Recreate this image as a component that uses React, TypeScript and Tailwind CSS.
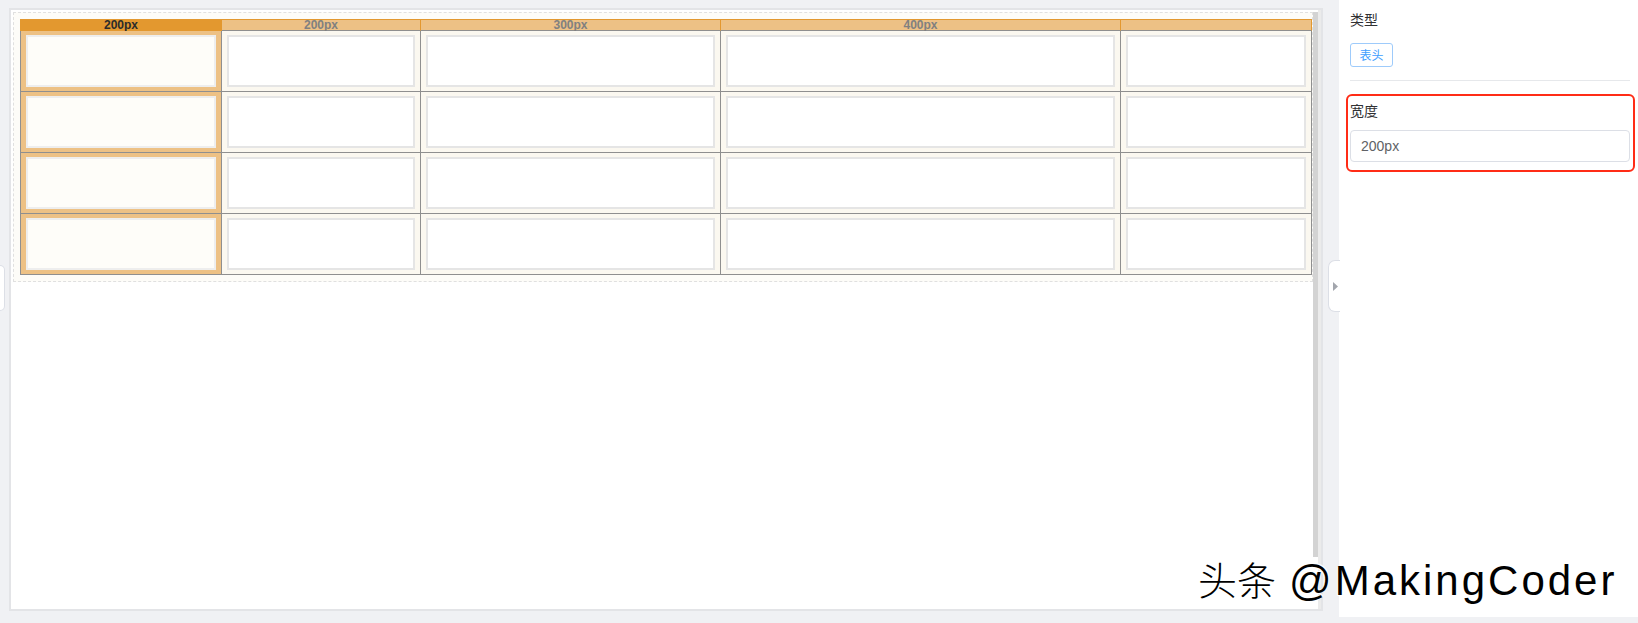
import React from "react";

const cols = [
  { w: "w-[201px]", label: "200px" },
  { w: "w-[199px]", label: "200px" },
  { w: "w-[300px]", label: "300px" },
  { w: "w-[400px]", label: "400px" },
  { w: "w-[191px]", label: "" },
];

const rows = [0, 1, 2, 3];

const HeaderRow: React.FC = () => (
  <div className="flex border-t border-l border-[#e3982f]">
    {cols.map((c, i) => (
      <div
        key={i}
        className={`${c.w} h-[11px] shrink-0 border-r text-center text-[12px] font-bold leading-[11px] ${
          i === 0
            ? "border-[#e3982f] bg-[#e3982f] text-[#2b2b2b]"
            : "border-r-[#e3982f] border-b border-b-[#8f8f8f] bg-[#edc185] text-[#808080]"
        }`}
      >
        {c.label}
      </div>
    ))}
  </div>
);

const BodyRow: React.FC = () => (
  <div className="flex border-l border-[#8f8f8f]">
    {cols.map((c, i) => (
      <div
        key={i}
        className={`${c.w} h-[61px] shrink-0 border-r border-b border-[#8f8f8f] pt-[4px] pb-[4px] pl-[5px] pr-[5px] ${
          i === 0 ? "bg-[#edc185]" : "bg-[#fbf8f0]"
        }`}
      >
        <div
          className={`h-full border-2 ${
            i === 0 ? "border-[#eeeeee] bg-[#fefdf9]" : "border-[#e5e5e5] bg-white"
          }`}
        />
      </div>
    ))}
  </div>
);

export default function App() {
  return (
    <div className="relative flex h-[623px] w-[1638px] overflow-hidden bg-[#f0f1f4] font-['Liberation_Sans',sans-serif]">
      {/* canvas area */}
      <div className="flex-1 pt-[8px] pb-[12px] pl-[9px] pr-[16px]">
        <div className="flex h-full border-2 border-[#e3e4e7] bg-white">
          <div className="flex-1 pt-[2px] pl-[2px]">
            <div className="border border-dashed border-[#e0e0e0] bg-[#fdfcf8] pt-[6px] pb-[6px] pl-[6px]">
              <HeaderRow />
              {rows.map((r) => (
                <BodyRow key={r} />
              ))}
            </div>
          </div>
          <div className="flex w-[8px]">
            <div className="mt-[2px] mb-[52px] w-[5px] bg-[#d3d3d3]" />
            <div className="w-[3px] bg-[#ebebeb]" />
          </div>
        </div>
      </div>

      {/* properties panel */}
      <div className="h-[617px] w-[299px] bg-white pl-[11px] pr-[8px] pt-[9px] font-['Noto_Sans_CJK_SC',sans-serif]">
        <div className="text-[14px] leading-[20px] text-[#303133]">类型</div>
        <div className="mt-[14px] flex h-[24px] w-[43px] items-center justify-center rounded-[3px] border border-[#9ecbfb] text-[12px] text-[#409eff]">
          表头
        </div>
        <div className="mt-[13px] h-px bg-[#e6e8eb]" />
        <div className="mt-[13px] -ml-[4px] -mr-[5px] rounded-[6px] border-2 border-[#ff2c16] pt-[4px] pb-[8px] pl-[2px] pr-[3px]">
          <div className="text-[14px] leading-[20px] text-[#303133]">宽度</div>
          <div className="mt-[10px] flex h-[32px] items-center rounded-[4px] border border-[#dcdfe6] px-[10px] font-['Liberation_Sans',sans-serif] text-[14px] text-[#606266]">
            200px
          </div>
        </div>
      </div>

      {/* collapse handles */}
      <div className="absolute left-0 top-[265px] h-[46px] w-[5px] rounded-r-[5px] border border-l-0 border-[#dcdfe6] bg-white" />
      <div className="absolute left-[1328px] top-[260px] flex h-[52px] w-[12px] items-center justify-center rounded-l-[7px] border border-r-0 border-[#dcdfe6] bg-white">
        <svg width="5" height="9" viewBox="0 0 5 9" className="ml-[1px]">
          <path d="M0 0 L5 4.5 L0 9 Z" fill="#a3a6ad" />
        </svg>
      </div>

      {/* watermark */}
      <div className="absolute left-[1198px] top-[559px] flex items-baseline whitespace-nowrap leading-none text-black [text-shadow:-1px_1px_0_#fff,1px_-1px_0_#fff]">
        <span className="font-['Noto_Sans_CJK_SC',sans-serif] text-[39px] font-light">头条</span>
        <span className="ml-[13px] text-[42px] tracking-[3px]">@MakingCoder</span>
      </div>
    </div>
  );
}
